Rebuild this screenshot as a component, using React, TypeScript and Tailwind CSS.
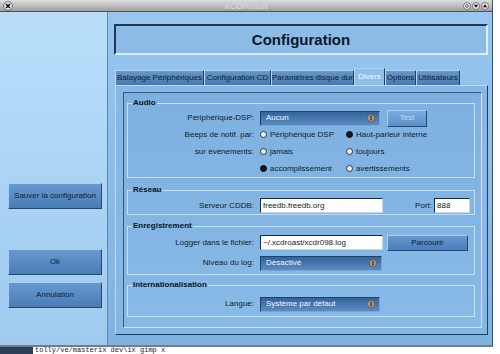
import React from "react";

// small round knob drawn on the right end of each option menu
function Knob() {
  return (
    <svg width="8" height="8" viewBox="0 0 8 8">
      <circle cx="4" cy="4" r="3.6" fill="#b99c7c" stroke="#5c4630" strokeWidth="0.6" />
      <path d="M4 1.6 L5.4 3.4 L2.6 3.4 Z" fill="#2e2418" />
      <path d="M4 6.4 L5.4 4.6 L2.6 4.6 Z" fill="#2e2418" />
    </svg>
  );
}

function Combo({ value, w }: { value: string; w: string }) {
  return (
    <div
      className={`${w} h-[15px] flex items-center justify-between pl-[5px] pr-[4px] border border-t-[#20416a] border-l-[#20416a] border-b-[#7aa6d4] border-r-[#7aa6d4] bg-linear-to-b from-[#34639b] to-[#5a8cc3] text-[#f2f7fc]`}
    >
      <span>{value}</span>
      <Knob />
    </div>
  );
}

function Entry({ value, w }: { value: string; w: string }) {
  return (
    <div
      className={`${w} h-[15px] flex items-center pl-[2px] bg-white border border-t-[#1b2836] border-l-[#1b2836] border-b-[#c4d8ec] border-r-[#c4d8ec] text-[#202020]`}
    >
      {value}
    </div>
  );
}

function Btn({ label, className = "", dim = false }: { label: string; className?: string; dim?: boolean }) {
  return (
    <div
      className={`flex items-center justify-center border border-t-[#a8cdf0] border-l-[#a8cdf0] border-b-[#27486e] border-r-[#27486e] bg-linear-to-b ${
        dim ? "from-[#7aaee2] to-[#5c90c8] text-[#c9d9ea]" : "from-[#6699cf] to-[#4a7db6] text-[#0f2038]"
      } ${className}`}
    >
      {label}
    </div>
  );
}

function Radio({ label, checked = false }: { label: string; checked?: boolean }) {
  return (
    <div className="w-[86px] flex items-center gap-[3px]">
      <span
        className={`w-[7px] h-[7px] rounded-full border-[1.5px] ${
          checked ? "bg-[#161616] border-[#0a0a0a]" : "bg-[#eef3f8] border-[#25323f]"
        }`}
      />
      <span>{label}</span>
    </div>
  );
}

function Tab({ label, w, active = false }: { label: string; w: string; active?: boolean }) {
  return (
    <div
      className={`${w} flex items-center justify-center border border-b-0 border-t-[#b4d6f2] border-l-[#b4d6f2] border-r-[#23405e] ${
        active
          ? "h-[17px] bg-[#8fbee9] text-[#f4f8fc]"
          : "h-[15px] bg-linear-to-b from-[#6497cc] to-[#4878b0] text-[#0f1f35]"
      }`}
    >
      {label}
    </div>
  );
}

function Row({ label, h = "h-[17px]", children }: { label: string; h?: string; children?: React.ReactNode }) {
  return (
    <div className={`flex items-center ${h}`}>
      <div className="w-[126px] text-right">{label}</div>
      <div className="ml-[6px] flex flex-1 items-center">{children}</div>
    </div>
  );
}

function Group({ title, className = "", children }: { title: string; className?: string; children: React.ReactNode }) {
  return (
    <fieldset className={`border border-[#c9e1f6] ${className}`}>
      <legend className="ml-[4px] px-[1px] font-bold leading-[10px] text-[#0a1422]">{title}</legend>
      {children}
    </fieldset>
  );
}

export default function App() {
  return (
    <div className="relative w-[500px] h-[354px] bg-white overflow-hidden font-['Liberation_Sans',Arial,sans-serif] text-[8px] leading-[10px] text-[#0e1c2c]">
      <div className="w-[493px] h-[347px] flex flex-col border-r border-b-2 border-r-[#3e5064] border-b-[#6a7e94]">
        {/* title bar */}
        <div className="h-[12px] flex items-center px-[3px] bg-linear-to-b from-[#dedede] to-[#a0a0a0] border-b border-[#505050]">
          <div className="flex-1">
            <svg width="10" height="10" viewBox="0 0 10 10">
              <circle cx="5" cy="5" r="4.4" fill="#e8e8e8" stroke="#555" strokeWidth="0.8" />
              <path d="M3 3 L7 7 M7 3 L3 7" stroke="#111" strokeWidth="1.6" />
            </svg>
          </div>
          <span className="font-bold text-[9px] text-[#d4d4d4]">XCDRoast</span>
          <div className="flex-1 flex justify-end gap-[1px]">
            <svg width="8" height="8" viewBox="0 0 8 8">
              <circle cx="4" cy="4" r="3.5" fill="#e8e8e8" stroke="#555" strokeWidth="0.7" />
              <circle cx="4" cy="4" r="1.4" fill="none" stroke="#333" strokeWidth="0.7" />
            </svg>
            <svg width="8" height="8" viewBox="0 0 8 8">
              <circle cx="4" cy="4" r="3.5" fill="#e8e8e8" stroke="#555" strokeWidth="0.7" />
              <path d="M1.8 2.8 L6.2 2.8 L4 5.8 Z" fill="#111" />
            </svg>
            <svg width="8" height="8" viewBox="0 0 8 8">
              <circle cx="4" cy="4" r="3.5" fill="#e8e8e8" stroke="#555" strokeWidth="0.7" />
              <path d="M1.8 5.2 L6.2 5.2 L4 2.2 Z" fill="#111" />
            </svg>
          </div>
        </div>

        <div className="flex-1 flex min-h-0">
          {/* left button column */}
          <div className="w-[108px] flex flex-col pl-[8px] pt-[171px] border-r border-[#5e86ae] bg-linear-to-b from-[#b8defa] to-[#9fcbef]">
            <Btn label="Sauver la configuration" className="w-[94px] h-[26px]" />
            <Btn label="Ok" className="w-[94px] h-[26px] mt-[40px]" />
            <Btn label="Annulation" className="w-[94px] h-[26px] mt-[7px]" />
          </div>

          {/* main area */}
          <div className="flex-1 flex flex-col pl-[6px] pr-[4px] pt-[12px] bg-linear-to-b from-[#98c6ef] to-[#80b2e2]">
            <div className="h-[31px] flex items-center justify-center border-2 border-t-[#1d3957] border-l-[#1d3957] border-b-[#dcefff] border-r-[#dcefff] bg-[#8cbbe8]">
              <span className="text-[15px] leading-[18px] font-bold text-[#0c1828]">Configuration</span>
            </div>

            <div className="mt-[13px] ml-[1px] h-[17px] flex items-end">
              <Tab label="Balayage Périphériques" w="w-[89px]" />
              <Tab label="Configuration CD" w="w-[67px]" />
              <Tab label="Paramètres disque dur" w="w-[83px]" />
              <Tab label="Divers" w="w-[31px]" active />
              <Tab label="Options" w="w-[31px]" />
              <Tab label="Utilisateurs" w="w-[44px]" />
            </div>

            <div className="ml-[1px] h-[250px] flex flex-col pl-[7px] pr-[5px] pt-[6px] pb-[6px] border border-t-[#bcdaf4] border-l-[#bcdaf4] border-b-[#21405f] border-r-[#21405f] bg-[#86b8e6]">
              <div className="flex-1 flex flex-col pl-[3px] pr-[6px] pt-[5px] border border-t-[#35577b] border-l-[#35577b] border-b-[#cfe5f8] border-r-[#cfe5f8] bg-linear-to-b from-[#7eb0e1] to-[#88bae7]">
                <Group title="Audio" className="pt-[2px]">
                  <Row label="Périphérique-DSP:" h="h-[16px]">
                    <Combo value="Aucun" w="w-[120px]" />
                    <Btn label="Test" dim className="ml-[7px] w-[40px] h-[17px]" />
                  </Row>
                  <Row label="Beeps de notif. par:">
                    <Radio label="Périphérique DSP" />
                    <Radio label="Haut-parleur interne" checked />
                  </Row>
                  <Row label="sur évènements:">
                    <Radio label="jamais" />
                    <Radio label="toujours" />
                  </Row>
                  <Row label="">
                    <Radio label="accomplissement" checked />
                    <Radio label="avertissements" />
                  </Row>
                </Group>

                <Group title="Réseau" className="mt-[7px] pt-[3px] pb-[1px]">
                  <Row label="Serveur CDDB:" h="h-[15px]">
                    <Entry value="freedb.freedb.org" w="w-[123px]" />
                    <span className="ml-auto">Port:</span>
                    <div className="ml-[2px] mr-[4px]">
                      <Entry value="888" w="w-[36px]" />
                    </div>
                  </Row>
                </Group>

                <Group title="Enregistrement" className="mt-[6px] pt-[3px] pb-[3px]">
                  <Row label="Logger dans le fichier:">
                    <Entry value="~/.xcdroast/xcdr098.log" w="w-[123px]" />
                    <Btn label="Parcourir" className="ml-[4px] w-[81px] h-[16px]" />
                  </Row>
                  <div className="mt-[4px]">
                    <Row label="Niveau du log:" h="h-[16px]">
                      <Combo value="Désactivé" w="w-[122px]" />
                    </Row>
                  </div>
                </Group>

                <Group title="Internationalisation" className="mt-[5px] pt-[6px] pb-[4px]">
                  <Row label="Langue:" h="h-[16px]">
                    <Combo value="Système par défaut" w="w-[120px]" />
                  </Row>
                </Group>
              </div>
            </div>
          </div>
        </div>
      </div>

      {/* desktop behind the window */}
      <div className="flex h-[7px]">
        <div className="w-[33px] h-full bg-[#2c3e56]" />
        <span className="ml-[2px] font-['Liberation_Mono',monospace] text-[7px] leading-[7px] text-[#222]">
          tolly/ve/masterix dev\ix gimp x
        </span>
      </div>
    </div>
  );
}
